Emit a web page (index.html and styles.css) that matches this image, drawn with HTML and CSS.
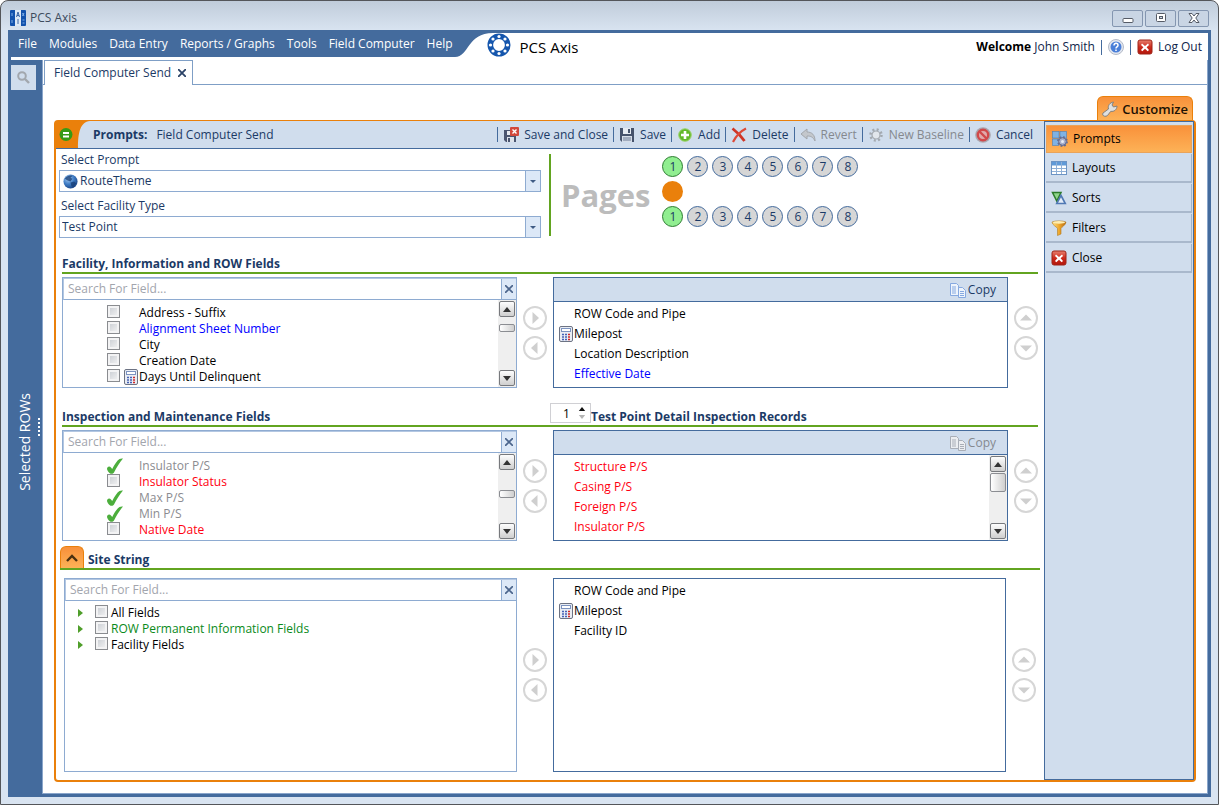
FILE: index.html
```html
<!DOCTYPE html>
<html lang="en">
<head>
  <meta charset="UTF-8">
  <meta name="viewport" content="width=device-width, initial-scale=1.0">
  <title>PCS Axis</title>
  <link rel="stylesheet" href="styles.css">
</head>
<body>
  <!-- shared icons -->
  <svg class="sprite" aria-hidden="true">
    <defs>
      <linearGradient id="redFill" x1="0" y1="0" x2="0" y2="1">
        <stop offset="0" stop-color="#e8806f"/><stop offset=".5" stop-color="#cc2a1c"/><stop offset="1" stop-color="#b3160c"/>
      </linearGradient>
      <linearGradient id="goldFill" x1="0" y1="0" x2="1" y2="0">
        <stop offset="0" stop-color="#fbe08a"/><stop offset=".5" stop-color="#f0a92c"/><stop offset="1" stop-color="#b8690f"/>
      </linearGradient>
      <radialGradient id="globeFill" cx=".35" cy=".3" r=".8">
        <stop offset="0" stop-color="#a9cdf2"/><stop offset=".5" stop-color="#3f7cc4"/><stop offset="1" stop-color="#153c7c"/>
      </radialGradient>
    </defs>
    <symbol id="i-close-red" viewBox="0 0 16 16">
      <rect x="1" y="1" width="14" height="14" rx="2" fill="url(#redFill)" stroke="#9e2317"/>
      <path d="M5 4.500L8 7l3-2.500 1 1.500-2.400 2.200L12 11l-1.300 1.300L8 9.800l-2.700 2.500L4 11l2.400-2.800L4 6z" fill="#fff"/>
    </symbol>
    <symbol id="i-calc" viewBox="0 0 14 16">
      <rect x=".5" y=".5" width="13" height="15" rx="1.500" fill="#e9edf4" stroke="#6d7383"/>
      <rect x="2.500" y="2.500" width="9" height="3" fill="#fff" stroke="#7c93c0"/>
      <path d="M3 8.500h2M6 8.500h2M3 11h2M6 11h2M3 13.500h2M6 13.500h2" stroke="#4562b5" stroke-width="1.300"/>
      <path d="M9 8.500h2M9 11h2M9 13.500h2" stroke="#d02828" stroke-width="1.300"/>
    </symbol>
    <symbol id="i-check" viewBox="0 0 16 16">
      <path d="M0 11C0 8.500 2.500 7.500 4 9.500L5.200 11C7.500 6.500 10 2.500 12.500 1c1-.6 2.500-.7 3.500-.5C12.500 4.500 9.500 9.500 7 14.500c-.9 1.700-3.200 1.700-4.500.5C1.500 14 .2 12.500 0 11z" fill="#4cae3c"/>
    </symbol>
    <symbol id="i-copy" viewBox="0 0 16 16">
      <path d="M.5 1.500h6l2 2v10h-8z"/>
      <path d="M2 5h4M2 7h4M2 9h4M2 11h4"/>
      <path d="M8.500 5.500h4l3 3v7h-7z"/>
      <path d="M10 9.500h4M10 11.500h4M10 13.500h4"/>
    </symbol>
    <symbol id="i-circle-right" viewBox="0 0 24 24">
      <circle cx="12" cy="12" r="11" fill="none" stroke="#d6d6d6" stroke-width="2"/>
      <path d="M9.500 6v12l6.500-6z" fill="#cfcfcf"/>
    </symbol>
    <symbol id="i-circle-up" viewBox="0 0 24 24">
      <circle cx="12" cy="12" r="11" fill="none" stroke="#d6d6d6" stroke-width="2"/>
      <path d="M6 14.500h12L12 8.500z" fill="#cfcfcf"/>
    </symbol>
    <symbol id="i-up" viewBox="0 0 8 5"><path d="M0 5h8L4 0z" fill="#333"/></symbol>
    <symbol id="i-down" viewBox="0 0 8 5"><path d="M0 0h8L4 5z" fill="#333"/></symbol>
  </svg>

  <div class="window">
    <header class="titlebar">
      <svg class="app-icon" viewBox="0 0 16 16">
        <rect width="16" height="16" rx="1" fill="#1252ad"/>
        <rect x="5" y="0" width="6" height="16" fill="#dde9f6"/>
        <path d="M6.500 7L8 2l1.500 5M7 5.500h2M8 9v5" stroke="#3a66a6" fill="none"/>
        <path d="M2 3v3M2 10v3M12.500 3l1.500 3M14 3l-1.500 3M12.500 10h2M12.500 13h2" stroke="#7fb0ea" fill="none"/>
      </svg>
      <span class="titlebar-text">PCS Axis</span>
      <div class="window-buttons">
        <button type="button" aria-label="Minimize"><svg viewBox="0 0 14 12"><rect x="2" y="6.500" width="10" height="4" rx="1" fill="#fff" stroke="#555b66"/></svg></button>
        <button type="button" aria-label="Maximize"><svg viewBox="0 0 14 12"><rect x="2.500" y="1.500" width="9" height="8" rx="1" fill="#fff" stroke="#555b66"/><rect x="5.500" y="4.500" width="3" height="2" fill="#cfd9e6" stroke="#555b66"/></svg></button>
        <button type="button" aria-label="Close window"><svg viewBox="0 0 14 12"><path d="M2 1.500h3L7 4l2-2.500h3L8.800 6 12 10.500H9L7 8l-2 2.500H2L5.200 6z" fill="#fff" stroke="#555b66"/></svg></button>
      </div>
    </header>

    <div class="app">
      <div class="app-header">
        <nav class="menu">
          <a href="#">File</a>
          <a href="#">Modules</a>
          <a href="#">Data Entry</a>
          <a href="#">Reports / Graphs</a>
          <a href="#">Tools</a>
          <a href="#">Field Computer</a>
          <a href="#">Help</a>
        </nav>
        <svg class="menu-curve" viewBox="0 0 38 24"><path d="M0 0h38C12 0 14 24 0 24z" fill="#446b9d"/></svg>
        <svg class="logo" viewBox="0 0 24 24">
          <circle cx="12" cy="12" r="8.700" fill="none" stroke="#1556ad" stroke-width="5.600"/>
          <g fill="#fff">
            <circle cx="12" cy="3.500" r="1.600"/><circle cx="18" cy="6" r="1.600"/><circle cx="20.500" cy="12" r="1.600"/><circle cx="18" cy="18" r="1.600"/>
            <circle cx="12" cy="20.500" r="1.600"/><circle cx="6" cy="18" r="1.600"/><circle cx="3.500" cy="12" r="1.600"/><circle cx="6" cy="6" r="1.600"/>
          </g>
        </svg>
        <span class="product">PCS Axis</span>
        <div class="user">
          <span><strong>Welcome</strong> John Smith</span>
          <i class="sep"></i>
          <button type="button" aria-label="Help">
            <svg class="icon" viewBox="0 0 16 16"><circle cx="8" cy="8" r="7.500" fill="#e4e8f0" stroke="#b3bac8"/><circle cx="8" cy="8" r="5.500" fill="#4a7fd8"/><path d="M6 6.500c0-3 4-2.600 4-.3C10 8 8 7.800 8 9.500M8 10.500V12" stroke="#fff" stroke-width="1.500" fill="none"/></svg>
          </button>
          <i class="sep"></i>
          <a href="#" class="logout"><svg class="icon"><use href="#i-close-red"/></svg>Log Out</a>
        </div>
      </div>

      <div class="app-body">
        <aside class="rail">
          <div class="rail-main">
            <button type="button" class="rail-search" aria-label="Search">
              <svg viewBox="0 0 13 13"><circle cx="5" cy="5" r="3.800" fill="none" stroke="#a2a7ae" stroke-width="2"/><path d="M8 8l4 4" stroke="#a2a7ae" stroke-width="2.400"/></svg>
            </button>
            <span class="rail-label">Selected ROWs</span>
          </div>
          <i class="grip"></i>
        </aside>

        <main class="main">
          <div class="tabs">
            <div class="tab">Field Computer Send
              <button type="button" aria-label="Close tab"><svg viewBox="0 0 8 8"><path d="M0 0l8 8M8 0L0 8" stroke="#2b4367" stroke-width="1.800"/></svg></button>
            </div>
          </div>

          <div class="page">
            <button type="button" class="customize">
              <svg class="icon" viewBox="0 0 16 16"><path d="M1 12L6.500 8C5.500 4.500 8 1.500 11.500 1L10 4l1.500 2 3.500-1c0 3.500-3 6-6.200 5.300L5.500 14.500C3 16.500-.5 14.500 1 12z" fill="#dfe0e0" stroke="#84817c"/></svg>
              Customize
            </button>

            <div class="panel">
              <div class="panel-main">
                <div class="toolbar">
                  <div class="toolbar-corner">
                    <svg viewBox="0 0 34 27"><path d="M0 0h34C24 1 22 12 22 27H0z" fill="#ea800b"/><circle cx="10" cy="13.500" r="6.500" fill="#379a14"/><path d="M7 12h6M7 15.500h6" stroke="#fff" stroke-width="2"/></svg>
                  </div>
                  <h1><strong>Prompts:</strong>Field Computer Send</h1>
                  <div class="toolbar-buttons">
                    <i class="sep"></i>
                    <button type="button"><svg class="icon" viewBox="0 0 16 16"><path d="M1 3h12v12H3l-2-2z" fill="#4a5570"/><rect x="4" y="4" width="6" height="4" fill="#e6e9ef"/><rect x="4" y="10" width="7" height="5" fill="#dde2ea"/><rect x="5" y="11" width="2" height="4" fill="#4a5570"/><rect x="7" y="0" width="9" height="9" rx="1" fill="#d2483c"/><path d="M9.500 2.500l4 4M13.500 2.500l-4 4" stroke="#fff" stroke-width="1.400"/></svg>Save and Close</button>
                    <i class="sep"></i>
                    <button type="button"><svg class="icon" viewBox="0 0 16 16"><path d="M1 1h14v14H3l-2-2z" fill="#46536c"/><rect x="4" y="1" width="8" height="6" fill="#e6ebf2"/><rect x="9" y="2" width="2" height="4" fill="#46536c"/><rect x="3" y="9" width="10" height="6" fill="#d5dde8"/><path d="M4 11h8M4 13h8" stroke="#6e7d96"/></svg>Save</button>
                    <i class="sep"></i>
                    <button type="button"><svg class="icon" viewBox="0 0 16 16"><circle cx="8" cy="8" r="6.300" fill="#63b92a" stroke="#9ed46f"/><path d="M8 4v8M4 8h8" stroke="#fff" stroke-width="2.600"/></svg>Add</button>
                    <i class="sep"></i>
                    <button type="button"><svg class="icon" viewBox="0 0 16 16"><path d="M1.500 1.500C6 5 10 9 13.500 14" stroke="#cf3526" stroke-width="2.800" fill="none"/><path d="M15 1.500C9 4.500 5 9 2 15" stroke="#dd4a38" stroke-width="2.200" fill="none"/></svg>Delete</button>
                    <i class="sep"></i>
                    <button type="button" disabled><svg class="icon" viewBox="0 0 16 16"><path d="M1 7l6-5v3c5 0 8 3 8 9-2-4-4-5-8-5v3z" fill="#c3c7cc" stroke="#a2a7ad"/></svg>Revert</button>
                    <i class="sep"></i>
                    <button type="button" disabled><svg class="icon" viewBox="0 0 16 16"><circle cx="8" cy="8" r="5.500" fill="none" stroke="#a3a9b0" stroke-width="2.500" stroke-dasharray="2 2.320"/><circle cx="8" cy="8" r="4" fill="#e1e6ec" stroke="#a3a9b0" stroke-width="1.200"/></svg>New Baseline</button>
                    <i class="sep"></i>
                    <button type="button"><svg class="icon" viewBox="0 0 16 16"><circle cx="8" cy="8" r="7.800" fill="#aaa6ae"/><circle cx="8" cy="8" r="5.200" fill="#e0a9ab" stroke="#d1484a" stroke-width="2.400"/><path d="M4.500 4.500l7 7" stroke="#d1484a" stroke-width="2.400"/></svg>Cancel</button>
                  </div>
                </div>

                <div class="top-row">
                  <div class="selectors">
                    <label for="prompt">Select Prompt</label>
                    <div class="combo">
                      <svg class="globe" viewBox="0 0 16 16"><circle cx="8" cy="8" r="7.500" fill="url(#globeFill)"/><path d="M2 5c2-3 6-4 8-3L8 4l2 1-2 3-3-1zM8 9l4-1 2 2-3 4-2-1z" fill="#173c73" opacity=".75"/></svg>
                      <select id="prompt"><option>RouteTheme</option></select>
                      <span class="combo-arrow"></span>
                    </div>
                    <label for="facility">Select Facility Type</label>
                    <div class="combo">
                      <select id="facility"><option>Test Point</option></select>
                      <span class="combo-arrow"></span>
                    </div>
                  </div>
                  <div class="pages">
                    <span class="pages-title">Pages</span>
                    <div class="pages-rows">
                      <div class="dots">
                        <button type="button" class="dot on">1</button><button type="button" class="dot">2</button><button type="button" class="dot">3</button><button type="button" class="dot">4</button><button type="button" class="dot">5</button><button type="button" class="dot">6</button><button type="button" class="dot">7</button><button type="button" class="dot">8</button>
                      </div>
                      <div class="dots"><span class="dot marker"></span></div>
                      <div class="dots">
                        <button type="button" class="dot on">1</button><button type="button" class="dot">2</button><button type="button" class="dot">3</button><button type="button" class="dot">4</button><button type="button" class="dot">5</button><button type="button" class="dot">6</button><button type="button" class="dot">7</button><button type="button" class="dot">8</button>
                      </div>
                    </div>
                  </div>
                </div>

                <section class="section first">
                  <div class="section-head"><h2>Facility, Information and ROW Fields</h2></div>
                  <div class="columns">
                    <div class="source">
                      <div class="search">
                        <input type="text" placeholder="Search For Field..." aria-label="Search For Field">
                        <button type="button" aria-label="Clear"><svg viewBox="0 0 8 8"><path d="M0 0l8 8M8 0L0 8" stroke="#4b658c" stroke-width="1.600"/></svg></button>
                      </div>
                      <div class="scroll">
                        <ul class="fields">
                          <li><label><input type="checkbox"><span class="slot"></span>Address - Suffix</label></li>
                          <li class="blue"><label><input type="checkbox"><span class="slot"></span>Alignment Sheet Number</label></li>
                          <li><label><input type="checkbox"><span class="slot"></span>City</label></li>
                          <li><label><input type="checkbox"><span class="slot"></span>Creation Date</label></li>
                          <li><label><input type="checkbox"><span class="slot"><svg class="calc"><use href="#i-calc"/></svg></span>Days Until Delinquent</label></li>
                        </ul>
                        <div class="scrollbar">
                          <button type="button" aria-label="Scroll up"><svg><use href="#i-up"/></svg></button>
                          <i class="thumb thumb-top"></i>
                          <button type="button" aria-label="Scroll down"><svg><use href="#i-down"/></svg></button>
                        </div>
                      </div>
                    </div>
                    <div class="movers">
                      <button type="button" aria-label="Add field"><svg><use href="#i-circle-right"/></svg></button>
                      <button type="button" aria-label="Remove field" class="flip-x"><svg><use href="#i-circle-right"/></svg></button>
                    </div>
                    <div class="target">
                      <div class="target-head"><button type="button"><svg class="icon copy"><use href="#i-copy"/></svg>Copy</button></div>
                      <ul class="chosen">
                        <li><span class="slot"></span>ROW Code and Pipe</li>
                        <li><span class="slot"><svg class="calc"><use href="#i-calc"/></svg></span>Milepost</li>
                        <li><span class="slot"></span>Location Description</li>
                        <li class="blue"><span class="slot"></span>Effective Date</li>
                      </ul>
                    </div>
                    <div class="movers end">
                      <button type="button" aria-label="Move up"><svg><use href="#i-circle-up"/></svg></button>
                      <button type="button" aria-label="Move down" class="flip-y"><svg><use href="#i-circle-up"/></svg></button>
                    </div>
                  </div>
                </section>

                <section class="section">
                  <div class="section-head">
                    <h2>Inspection and Maintenance Fields</h2>
                    <div class="records">
                      <div class="spinner">
                        <input type="text" id="records" value="1">
                        <span class="spinner-arrows">
                          <svg viewBox="0 0 8 5"><path d="M0 5h8L4 0z" fill="#111"/></svg>
                          <svg viewBox="0 0 8 5"><path d="M0 0h8L4 5z" fill="#b5b5b5"/></svg>
                        </span>
                      </div>
                      <h2><label for="records">Test Point Detail Inspection Records</label></h2>
                    </div>
                  </div>
                  <div class="columns">
                    <div class="source">
                      <div class="search">
                        <input type="text" placeholder="Search For Field..." aria-label="Search For Field">
                        <button type="button" aria-label="Clear"><svg viewBox="0 0 8 8"><path d="M0 0l8 8M8 0L0 8" stroke="#4b658c" stroke-width="1.600"/></svg></button>
                      </div>
                      <div class="scroll">
                        <ul class="fields">
                          <li class="used"><svg class="check"><use href="#i-check"/></svg>Insulator P/S</li>
                          <li class="red"><label><input type="checkbox"><span class="slot"></span>Insulator Status</label></li>
                          <li class="used"><svg class="check"><use href="#i-check"/></svg>Max P/S</li>
                          <li class="used"><svg class="check"><use href="#i-check"/></svg>Min P/S</li>
                          <li class="red"><label><input type="checkbox"><span class="slot"></span>Native Date</label></li>
                        </ul>
                        <div class="scrollbar">
                          <button type="button" aria-label="Scroll up"><svg><use href="#i-up"/></svg></button>
                          <i class="thumb thumb-middle"></i>
                          <button type="button" aria-label="Scroll down"><svg><use href="#i-down"/></svg></button>
                        </div>
                      </div>
                    </div>
                    <div class="movers">
                      <button type="button" aria-label="Add field"><svg><use href="#i-circle-right"/></svg></button>
                      <button type="button" aria-label="Remove field" class="flip-x"><svg><use href="#i-circle-right"/></svg></button>
                    </div>
                    <div class="target">
                      <div class="target-head"><button type="button" disabled><svg class="icon copy"><use href="#i-copy"/></svg>Copy</button></div>
                      <div class="scroll">
                        <ul class="chosen">
                          <li class="red"><span class="slot"></span>Structure P/S</li>
                          <li class="red"><span class="slot"></span>Casing P/S</li>
                          <li class="red"><span class="slot"></span>Foreign P/S</li>
                          <li class="red"><span class="slot"></span>Insulator P/S</li>
                        </ul>
                        <div class="scrollbar">
                          <button type="button" aria-label="Scroll up"><svg><use href="#i-up"/></svg></button>
                          <i class="thumb thumb-large"></i>
                          <button type="button" aria-label="Scroll down"><svg><use href="#i-down"/></svg></button>
                        </div>
                      </div>
                    </div>
                    <div class="movers end">
                      <button type="button" aria-label="Move up"><svg><use href="#i-circle-up"/></svg></button>
                      <button type="button" aria-label="Move down" class="flip-y"><svg><use href="#i-circle-up"/></svg></button>
                    </div>
                  </div>
                </section>

                <section class="section site-string">
                  <div class="section-head">
                    <button type="button" class="collapse" aria-label="Collapse"><svg viewBox="0 0 12 8"><path d="M1 7l5-5 5 5" fill="none" stroke="#4a3010" stroke-width="2.400"/></svg></button>
                    <h2>Site String</h2>
                  </div>
                  <div class="columns">
                    <div class="source">
                      <div class="search">
                        <input type="text" placeholder="Search For Field..." aria-label="Search For Field">
                        <button type="button" aria-label="Clear"><svg viewBox="0 0 8 8"><path d="M0 0l8 8M8 0L0 8" stroke="#4b658c" stroke-width="1.600"/></svg></button>
                      </div>
                      <ul class="fields tree">
                        <li><i class="expander"></i><label><input type="checkbox">All Fields</label></li>
                        <li class="green"><i class="expander"></i><label><input type="checkbox">ROW Permanent Information Fields</label></li>
                        <li><i class="expander"></i><label><input type="checkbox">Facility Fields</label></li>
                      </ul>
                    </div>
                    <div class="movers">
                      <button type="button" aria-label="Add field"><svg><use href="#i-circle-right"/></svg></button>
                      <button type="button" aria-label="Remove field" class="flip-x"><svg><use href="#i-circle-right"/></svg></button>
                    </div>
                    <div class="target">
                      <ul class="chosen">
                        <li><span class="slot"></span>ROW Code and Pipe</li>
                        <li><span class="slot"><svg class="calc"><use href="#i-calc"/></svg></span>Milepost</li>
                        <li><span class="slot"></span>Facility ID</li>
                      </ul>
                    </div>
                    <div class="movers end">
                      <button type="button" aria-label="Move up"><svg><use href="#i-circle-up"/></svg></button>
                      <button type="button" aria-label="Move down" class="flip-y"><svg><use href="#i-circle-up"/></svg></button>
                    </div>
                  </div>
                </section>
              </div>

              <aside class="side">
                <button type="button" class="side-item active">
                  <svg class="icon" viewBox="0 0 16 16"><g fill="#7fb2e4" stroke="#4a7fb8" stroke-width=".6"><rect x=".5" y=".5" width="6.500" height="6.500"/><rect x="8" y=".5" width="6.500" height="6.500"/><rect x=".5" y="8" width="6.500" height="6.500"/></g><circle cx="10.500" cy="10.500" r="4.500" fill="#8890b0" stroke="#636b90" stroke-width="1.800" stroke-dasharray="1.800 1.730"/><circle cx="10.500" cy="10.500" r="3.800" fill="#a9b0cc" stroke="#636b90"/><circle cx="10.500" cy="10.500" r="1.500" fill="#e8ecf5"/></svg>
                  Prompts
                </button>
                <button type="button" class="side-item">
                  <svg class="icon" viewBox="0 0 16 16"><rect x=".5" y="1.500" width="15" height="13" fill="#fff" stroke="#6c94c4"/><rect x="1" y="2" width="14" height="3.500" fill="#5f9ad8"/><path d="M1 8.500h14M1 11.500h14M5.500 2v12M10.500 2v12" stroke="#8fb0d6"/></svg>
                  Layouts
                </button>
                <button type="button" class="side-item">
                  <svg class="icon" viewBox="0 0 16 16"><path d="M1.500 2.500h8.500L5.800 11z" fill="#8ed48a" stroke="#2b7a2b" stroke-width="1.500"/><path d="M10 5.500l4.300 8H5.700z" fill="#e3ecf8" stroke="#4f78b4" stroke-width="1.600"/></svg>
                  Sorts
                </button>
                <button type="button" class="side-item">
                  <svg class="icon" viewBox="0 0 16 16"><path d="M1 2c3-1.500 11-1.500 14 0 0 3-4.500 5-5 6.500V14l-3.500 1.500v-7C6 7 1 5 1 2z" fill="url(#goldFill)" stroke="#b07a20" stroke-width=".6"/><ellipse cx="8" cy="2.400" rx="6" ry="1.300" fill="#fdeeb5"/></svg>
                  Filters
                </button>
                <button type="button" class="side-item">
                  <svg class="icon"><use href="#i-close-red"/></svg>
                  Close
                </button>
              </aside>
            </div>
          </div>
        </main>
      </div>
    </div>
  </div>
</body>
</html>
```

FILE: styles.css
```css
* {
  box-sizing: border-box;
}

body {
  margin: 0;
  background: #fff;
  font-family: "Open Sans", "Noto Sans", sans-serif;
  font-size: 12px;
  line-height: 16px;
  color: #1b3a66;
}

button,
input,
select {
  font: inherit;
  color: inherit;
  margin: 0;
}

button {
  padding: 0;
  border: none;
  background: none;
  cursor: pointer;
  white-space: nowrap;
}

a {
  color: inherit;
  text-decoration: none;
}

ul {
  list-style: none;
  margin: 0;
  padding: 0;
}

h1,
h2 {
  margin: 0;
  font-size: 12px;
  font-weight: 400;
}

h2 {
  font-weight: 700;
}

svg {
  display: block;
  flex: none;
}

.sprite {
  position: absolute;
  width: 0;
  height: 0;
}

.icon {
  width: 16px;
  height: 16px;
}

.sep {
  width: 1px;
  height: 15px;
  background: #446b9d;
}

.blue { color: #0000ff; }
.red { color: #ff0010; }
.green { color: #0a8a1a; }
.used { color: #8b8b90; }

/* window frame */
.window {
  display: flex;
  flex-direction: column;
  min-height: 100vh;
  padding: 0 7px 7px;
  border: 1px solid #54565a;
  border-radius: 8px 8px 0 0;
  background: linear-gradient(#c0ccda, #d9e4f1 30px);
}

.titlebar {
  display: flex;
  align-items: center;
  height: 29px;
  padding: 5px 2px 0;
}

.app-icon {
  width: 16px;
  height: 16px;
}

.titlebar-text {
  margin-left: 4px;
  color: #3d4b5d;
}

.window-buttons {
  display: flex;
  gap: 2px;
  margin-left: auto;
}

.window-buttons button {
  display: flex;
  justify-content: center;
  align-items: center;
  width: 31px;
  height: 17px;
  border: 1px solid #8496b0;
  border-radius: 2px;
  background: #c9d5e4;
}

.window-buttons svg {
  width: 14px;
  height: 12px;
}

.app {
  flex: 1;
  display: flex;
  flex-direction: column;
  border: 3px solid #446b9d;
  background: #fff;
}

.app-header {
  display: flex;
  height: 27px;
}

.menu {
  display: flex;
  align-items: center;
  gap: 12px;
  height: 24px;
  padding: 0 2px 2px 7px;
  background: #446b9d;
  color: #fff;
  white-space: nowrap;
}

.menu-curve {
  width: 38px;
  height: 24px;
}

.logo {
  width: 24px;
  height: 24px;
  margin-left: -6px;
}

.product {
  margin: 6px 0 0 9px;
  font-size: 15px;
  color: #000;
}

.user {
  display: flex;
  align-items: center;
  gap: 6px;
  height: 28px;
  margin-left: auto;
  padding-right: 6px;
  color: #10254a;
  white-space: nowrap;
}

.user strong {
  color: #000;
}

.logout {
  display: flex;
  align-items: center;
  gap: 5px;
}

.app-body {
  flex: 1;
  display: flex;
}

/* left rail */
.rail {
  display: flex;
  width: 31px;
  background: #446b9d;
}

.rail-main {
  display: flex;
  flex-direction: column;
  width: 27px;
}

.rail-search {
  display: flex;
  justify-content: center;
  align-items: center;
  width: 25px;
  height: 25px;
  margin-top: 5px;
  background: #d0dded;
}

.rail-search svg {
  width: 13px;
  height: 13px;
}

.rail-label {
  margin: auto 4px;
  writing-mode: vertical-rl;
  transform: rotate(180deg);
  font-size: 14px;
  line-height: 20px;
  color: #fff;
}

.grip {
  align-self: center;
  width: 2px;
  height: 18px;
  background: repeating-linear-gradient(#fff 0 2px, transparent 2px 4px);
}

/* document tabs */
.main {
  flex: 1;
  display: flex;
  flex-direction: column;
  min-width: 0;
  border: 1px solid #8aa6cb;
  border-top: none;
}

.tabs {
  display: flex;
  height: 25px;
  border-bottom: 1px solid #7f9fc6;
}

.tab {
  display: flex;
  align-items: center;
  gap: 7px;
  height: 25px;
  margin-left: 1px;
  padding: 0 6px 0 9px;
  border: 1px solid #7f9fc6;
  border-bottom: none;
  background: #fff;
}

.tab svg {
  width: 8px;
  height: 8px;
}

.page {
  flex: 1;
  display: flex;
  flex-direction: column;
  padding: 11px 11px 11px;
}

.customize {
  display: flex;
  align-items: center;
  gap: 4px;
  align-self: flex-end;
  height: 24px;
  margin-right: 3px;
  padding: 0 4px;
  border: 1px solid #ea800b;
  border-bottom: none;
  border-radius: 6px 6px 0 0;
  background: linear-gradient(#f8903a, #fdb257);
  font-size: 13px;
  font-weight: 600;
  color: #1c1204;
}

.panel {
  flex: 1;
  display: flex;
  border: 2px solid #ea800b;
  border-top-width: 1px;
  border-radius: 4px;
}

.panel-main {
  flex: 1;
  display: flex;
  flex-direction: column;
  min-width: 0;
}

/* toolbar */
.toolbar {
  display: flex;
  align-items: center;
  height: 28px;
  border-bottom: 1px solid #446b9d;
  background: #d0dded;
}

.toolbar-corner svg {
  width: 34px;
  height: 27px;
}

.toolbar h1 {
  margin-left: 3px;
  white-space: nowrap;
}

.toolbar h1 strong {
  margin-right: 9px;
}

.toolbar-buttons {
  display: flex;
  align-items: center;
  gap: 5px;
  margin-left: auto;
  padding-right: 11px;
}

.toolbar-buttons button {
  display: flex;
  align-items: center;
  gap: 5px;
}

.toolbar-buttons button:disabled {
  color: #85898f;
}

/* prompt and facility selectors */
.top-row {
  display: flex;
  padding: 3px 3px 0;
}

.selectors {
  width: 482px;
}

.selectors label {
  display: block;
  padding-left: 2px;
}

.combo {
  display: flex;
  align-items: center;
  height: 22px;
  margin: 2px 0 6px;
  border: 1px solid #8eabd1;
}

.globe {
  width: 15px;
  height: 15px;
  margin-left: 3px;
}

.combo select {
  flex: 1;
  height: 20px;
  padding: 0 2px;
  border: none;
  background: none;
  appearance: none;
}

.combo-arrow {
  display: flex;
  justify-content: center;
  align-items: center;
  width: 15px;
  height: 20px;
  border-left: 1px solid #8eabd1;
  background: #dce8f7;
  pointer-events: none;
}

.combo-arrow::after {
  content: "";
  border: 3px solid transparent;
  border-top-color: #3f5b84;
  border-bottom: none;
}

.pages {
  display: flex;
  gap: 12px;
  height: 82px;
  margin: 2px 0 0 8px;
  padding-left: 10px;
  border-left: 2px solid #62a420;
}

.pages-title {
  align-self: center;
  font-size: 31px;
  font-weight: 700;
  line-height: 40px;
  color: #bcbcbc;
}

.pages-rows {
  display: flex;
  flex-direction: column;
  gap: 4px;
  padding-top: 2px;
}

.dots {
  display: flex;
  gap: 4px;
}

.dot {
  width: 21px;
  height: 21px;
  border: 1px solid #446b9d;
  border-radius: 50%;
  background: #d6d6d6;
}

.dot.on {
  border-color: #2e7d32;
  background: #90ee90;
}

.dot.marker {
  border: none;
  background: #ea800b;
}

/* field sections */
.section {
  margin: 14px 6px 0;
}

.section.first {
  margin-top: 5px;
}

.section-head,
.columns {
  display: grid;
  grid-template-columns: minmax(0, 1fr) 36px minmax(0, 1fr) 30px;
}

.section-head {
  align-items: end;
  height: 25px;
  border-bottom: 2px solid #62a420;
}

.section-head h2 {
  white-space: nowrap;
}

.records {
  grid-column: 3;
  display: flex;
  align-items: end;
  margin-left: -3px;
}

.spinner {
  display: flex;
  align-items: center;
  width: 41px;
  height: 20px;
  margin-bottom: 2px;
  border: 1px solid #d0d0d4;
}

.spinner input {
  width: 24px;
  height: 18px;
  padding: 0 0 0 12px;
  border: none;
  color: #000;
}

.spinner-arrows {
  display: grid;
  gap: 4px;
  margin-left: 3px;
}

.spinner-arrows svg {
  width: 8px;
  height: 4px;
}

.columns {
  height: 111px;
  margin-top: 3px;
}

.source,
.target {
  display: flex;
  flex-direction: column;
  min-height: 0;
}

.source {
  border: 1px solid #8eabd1;
}

.target {
  border: 1px solid #446b9d;
}

.search {
  display: flex;
  flex: none;
  height: 22px;
  border: 1px solid #b3c7e2;
  border-bottom-color: #8eabd1;
  border-right: none;
}

.search input {
  flex: 1;
  min-width: 0;
  padding: 0 4px;
  border: none;
  outline: none;
}

.search input::placeholder {
  color: #a2a5ad;
}

.search button {
  display: flex;
  justify-content: center;
  align-items: center;
  width: 15px;
  border-left: 1px solid #8eabd1;
  background: #dce8f7;
}

.search button svg {
  width: 8px;
  height: 8px;
}

.scroll {
  flex: 1;
  display: flex;
  min-height: 0;
}

.scroll ul {
  flex: 1;
  overflow: hidden;
}

.fields {
  padding: 5px 0 0 44px;
  color: #000;
}

.fields li,
.fields label {
  display: flex;
  align-items: center;
  height: 16px;
  white-space: nowrap;
}

.fields input {
  align-self: flex-start;
  appearance: none;
  width: 13px;
  height: 13px;
  border: 1px solid #8a8c90;
  background: linear-gradient(135deg, #c6cad0, #f6f6f6);
  box-shadow: inset 0 0 0 2px #f3f3f4;
}

.slot {
  display: flex;
  justify-content: flex-end;
  width: 19px;
  padding-right: 1px;
}

.calc {
  width: 14px;
  height: 16px;
}

.check {
  width: 16px;
  height: 16px;
  margin-right: 16px;
}

.tree {
  padding: 4px 0 0 13px;
}

.tree input {
  margin-right: 3px;
}

.expander {
  width: 17px;
}

.expander::before {
  content: "";
  display: block;
  width: 0;
  border: 4px solid transparent;
  border-left: 5px solid #4f9e2a;
  border-right: none;
}

.scrollbar {
  display: flex;
  flex-direction: column;
  align-items: center;
  width: 18px;
  padding: 1px 0;
  background: #efefef;
}

.scrollbar button {
  display: flex;
  justify-content: center;
  align-items: center;
  width: 16px;
  height: 16px;
  border: 1px solid #77797d;
  border-radius: 2px;
  background: linear-gradient(#fdfdfd, #cfcfcf);
}

.scrollbar svg {
  width: 8px;
  height: 5px;
}

.thumb {
  width: 16px;
  height: 8px;
  margin-bottom: auto;
  border: 1px solid #8b8d92;
  border-radius: 2px;
  background: linear-gradient(90deg, #fff, #cfcfcf);
}

.thumb-top { margin-top: 7px; }
.thumb-middle { margin-top: 20px; }
.thumb-large { height: 19px; margin-top: 1px; }

.movers {
  display: flex;
  flex-direction: column;
  justify-content: center;
  align-items: center;
  gap: 6px;
}

.movers.end {
  align-items: flex-end;
}

.movers button,
.movers svg {
  width: 24px;
  height: 24px;
}

.flip-x { transform: scaleX(-1); }
.flip-y { transform: scaleY(-1); }

.target-head {
  display: flex;
  justify-content: flex-end;
  flex: none;
  height: 24px;
  padding-right: 11px;
  border-bottom: 1px solid #446b9d;
  background: #d0dded;
}

.target-head button {
  display: flex;
  align-items: center;
  gap: 2px;
}

.target-head button:disabled {
  color: #85898f;
}

.copy {
  fill: #eef4fc;
  stroke: #86a9e0;
}

:disabled .copy {
  fill: #eceef1;
  stroke: #a9aeb7;
}

.chosen {
  padding: 2px 0 0 5px;
  color: #000;
}

.chosen li {
  display: flex;
  align-items: center;
  height: 20px;
  white-space: nowrap;
}

.chosen .slot {
  width: 15px;
}

/* site string fills the rest of the panel */
.site-string {
  flex: 1;
  display: flex;
  flex-direction: column;
  margin: 4px 4px 8px;
}

.site-string .section-head {
  grid-template-columns: 24px 1fr;
  gap: 4px;
}

.collapse {
  display: flex;
  justify-content: center;
  align-items: center;
  height: 22px;
  border: 1px solid #ea800b;
  border-bottom: none;
  border-radius: 6px 6px 0 0;
  background: linear-gradient(#f8903a, #fdb257);
}

.collapse svg {
  width: 12px;
  height: 8px;
}

.site-string .columns {
  flex: 1;
  height: auto;
  margin: 8px 4px 0;
}

/* right side menu */
.side {
  display: flex;
  flex-direction: column;
  gap: 1px;
  width: 150px;
  padding: 3px 1px 0;
  border: 1px solid #446b9d;
  background: #d0dded;
}

.side-item {
  display: flex;
  align-items: center;
  gap: 5px;
  height: 29px;
  padding: 0 5px;
  border-right: 1px solid #a3b3c9;
  border-bottom: 2px solid #a9b8cc;
  color: #000;
}

.side-item.active {
  height: 28px;
  border: 1px solid #e9a35a;
  background: linear-gradient(#f9913a, #fdb257);
}
```
